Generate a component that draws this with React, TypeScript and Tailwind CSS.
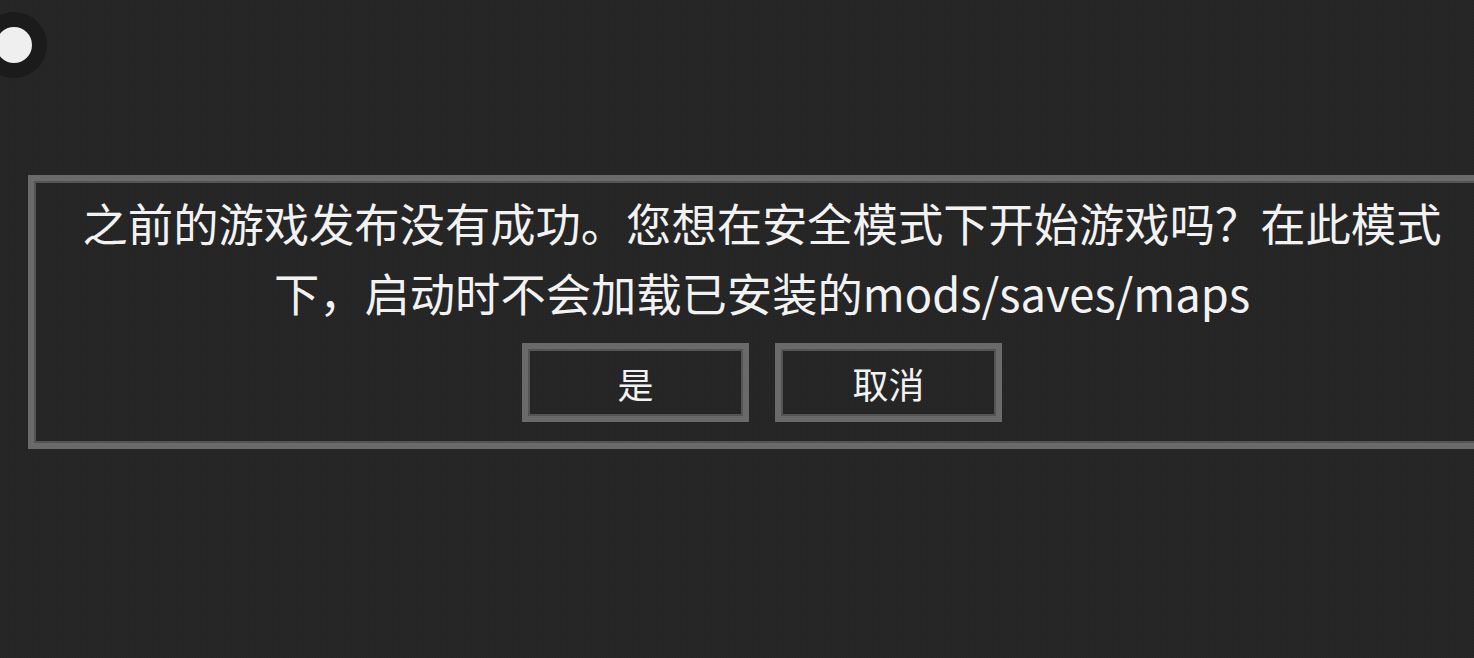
import React from "react";

function Btn({ label }: { label: string }) {
  return (
    <div className="w-[227px] h-[79px] border-[6px] border-[#6a6a6a]">
      <div className="w-full h-full border-2 border-[#545454] flex items-center justify-center text-[36px] leading-none text-[#f2f2f2]">
        {label}
      </div>
    </div>
  );
}

export default function App() {
  return (
    <div
      className="relative w-full h-[658px] overflow-hidden bg-[#262626] bg-[repeating-conic-gradient(#272727_0_25%,#242424_0_50%)] bg-[length:3px_3px]"
      style={{ fontFamily: '"Noto Sans CJK SC", "Noto Sans", sans-serif' }}
    >
      <div className="absolute left-[-19px] top-[12px] w-[66px] h-[66px] rounded-full bg-[#1b1b1b] flex items-center justify-center">
        <div className="w-[36px] h-[36px] rounded-full bg-[#efefef]" />
      </div>

      <div className="pt-[175px] pl-[28px]">
        <div className="w-[1468px] border-[6px] border-[#6a6a6a]">
          <div className="border-2 border-[#545454] pt-[4px] pb-[19px] flex flex-col items-center">
            <p className="max-w-[1390px] text-center text-[45.3px] leading-[70px] text-[#f2f2f2]">
              之前的游戏发布没有成功。您想在安全模式下开始游戏吗？在此模式下，启动时不会加载已安装的mods/saves/maps
            </p>
            <div className="mt-[16px] flex gap-[26px]">
              <Btn label="是" />
              <Btn label="取消" />
            </div>
          </div>
        </div>
      </div>
    </div>
  );
}
